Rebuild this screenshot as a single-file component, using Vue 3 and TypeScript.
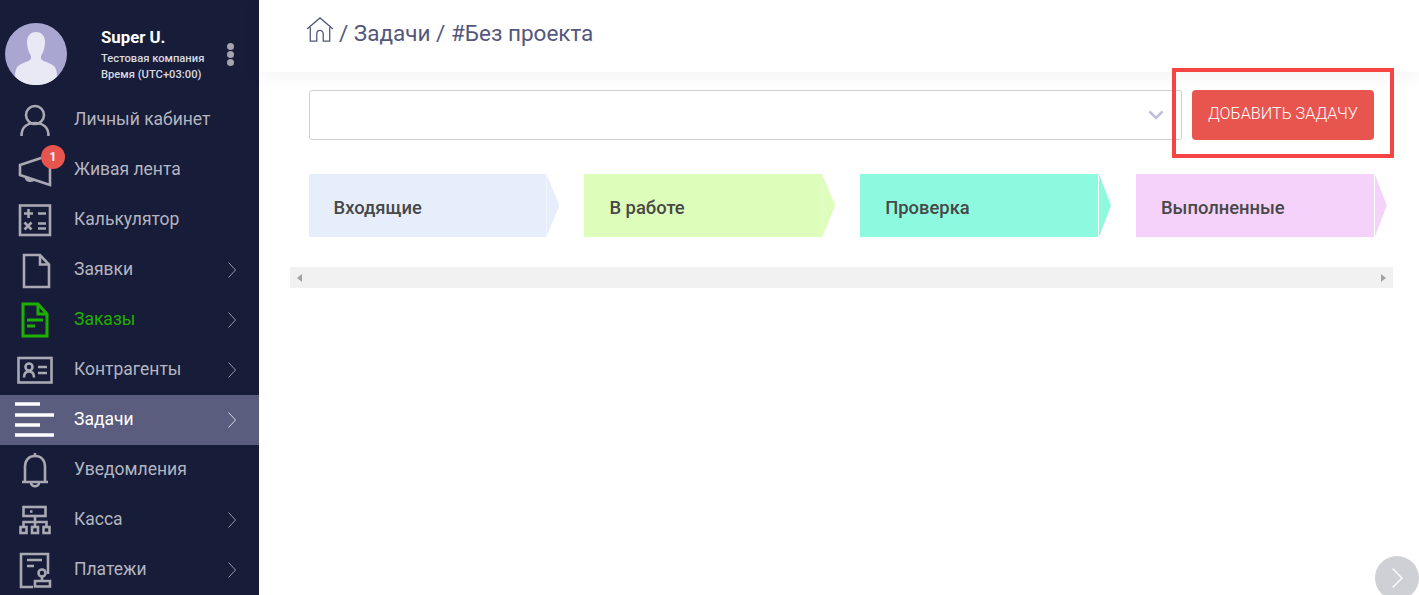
<template>
  <div class="app">
    <aside class="side">
      <div class="user">
        <svg class="user__avatar" viewBox="0 0 62 62">
          <circle cx="31" cy="31" r="31" fill="#a9a6d2" />
          <path d="M31 9c-6 0-9 4.500-9 10 0 5 1.500 10 3.500 13 1 2 .8 4-.5 5-3 2-9 3.500-12 6-2 2-3 6-3 10.500C15 59.500 23 62 31 62s16-2.500 21-8.500c0-4.500-1-8.500-3-10.500-3-2.500-9-4-12-6-1.300-1-1.500-3-.5-5 2-3 3.500-8 3.500-13 0-5.500-3-10-9-10z" fill="#e9e8f5" />
        </svg>
        <div class="user__info">
          <div class="user__name">Super U.</div>
          <div class="user__meta">Тестовая компания</div>
          <div class="user__meta">Время (UTC+03:00)</div>
        </div>
        <div class="user__dots"><i /><i /><i /></div>
      </div>
      <nav class="menu">
        <a
          v-for="item in menu"
          :key="item.label"
          class="menu__item"
          :class="{ 'menu__item--active': item.active, 'menu__item--green': item.green }"
        >
          <span class="menu__icon">
            <svg viewBox="0 0 44 44" fill="none" stroke="currentColor" stroke-width="2.600">
              <template v-if="item.icon === 'user'">
                <circle cx="22" cy="17" r="9" />
                <path d="M8.500 38c0-8 5-13 13.500-13s13.500 5 13.500 13" />
              </template>
              <template v-else-if="item.icon === 'horn'">
                <path d="M7 17 37 7v30L7 27z" />
                <path d="M13 29c0 4 6 5 8 2" />
              </template>
              <template v-else-if="item.icon === 'calc'">
                <rect x="7" y="7.500" width="30" height="29.500" />
                <path d="M11 15.500h9M15.500 11v9M25 15.500h8M11.500 24.500l7 7M18.500 24.500l-7 7M25 25.500h8M25 30.500h8" />
              </template>
              <template v-else-if="item.icon === 'file'">
                <path d="M11 7h16l9 9.500V39H11z" />
                <path d="M27 7v9.500h9" />
              </template>
              <template v-else-if="item.icon === 'order'">
                <path d="M10 6h15l9 10v22H10z" stroke-width="3" />
                <path d="M25 6v10h9M14 22h16M14 28h8" stroke-width="3" />
              </template>
              <template v-else-if="item.icon === 'contact'">
                <rect x="5.500" y="10" width="33" height="24.500" />
                <circle cx="16" cy="19" r="3.500" />
                <path d="M11 29.500c0-4 1.500-6 5-6s5 2 5 6M25 19h9M25 25h9" />
              </template>
              <template v-else-if="item.icon === 'tasks'">
                <path d="M2 6h25M2 17h39M2 27h25M2 37h39" stroke-width="3.500" />
              </template>
              <template v-else-if="item.icon === 'bell'">
                <path d="M12 34V19c0-7 4-11 10-11s10 4 10 11v15M9 34h26M22 5v3" />
                <path d="M18 34.500c0 5 8 5 8 0" />
              </template>
              <template v-else-if="item.icon === 'cash'">
                <rect x="10.500" y="9" width="22" height="9" />
                <path d="M22 18v11M10.500 29v-5h23v5M17 13.500h2.500" />
                <rect x="7.500" y="29" width="6" height="6" />
                <rect x="19" y="29" width="6" height="6" />
                <rect x="30.500" y="29" width="6" height="6" />
              </template>
              <template v-else>
                <path d="M35 26V6H8v33h12" />
                <path d="M14 12h15M14 18h7" />
                <circle cx="29" cy="25" r="3.500" />
                <path d="M29 28.500V33M22 33h15v5.500H22z" />
              </template>
            </svg>
            <span v-if="item.badge" class="menu__badge">{{ item.badge }}</span>
          </span>
          <span class="menu__label">{{ item.label }}</span>
          <svg v-if="item.arrow" class="menu__arrow" viewBox="0 0 8 16" fill="none" stroke="currentColor">
            <path d="M.5.500 7.500 8l-7 7.500" />
          </svg>
        </a>
      </nav>
    </aside>

    <main class="main">
      <header class="top">
        <svg class="top__home" viewBox="0 0 30 27" fill="none" stroke="currentColor" stroke-width="1.400">
          <path d="M1 13 15 1l14 12M4.500 11v15h7v-8a3.500 3.500 0 0 1 7 0v8h7V11" />
        </svg>
        <span>/ Задачи / #Без проекта</span>
      </header>

      <div class="content">
        <div class="filter">
          <div class="select">
            <svg class="select__arrow" viewBox="0 0 16 10" fill="none" stroke="currentColor" stroke-width="2.600">
              <path d="M1.500 1.500 8 8l6.500-6.500" />
            </svg>
          </div>
          <button class="add" type="button">ДОБАВИТЬ ЗАДАЧУ</button>
        </div>

        <div class="board">
          <div
            v-for="col in columns"
            :key="col.title"
            class="stage"
            :class="{ 'stage--split': col.split }"
          >
            <div class="stage__body" :style="{ background: col.color }">{{ col.title }}</div>
            <div class="stage__tip" :style="{ background: col.color }" />
          </div>
        </div>

        <div class="scrollbar">
          <i class="scrollbar__left" />
          <i class="scrollbar__right" />
        </div>
      </div>

      <div class="callout" />
      <div class="next">
        <svg viewBox="0 0 12 22" fill="none" stroke="#fff" stroke-width="1.300">
          <path d="M1.500 1.500 11 11l-9.500 9.500" />
        </svg>
      </div>
    </main>
  </div>
</template>

<script setup lang="ts">
type MenuItem = {
  label: string;
  icon: string;
  arrow?: boolean;
  active?: boolean;
  green?: boolean;
  badge?: number;
};

const menu: MenuItem[] = [
  { label: 'Личный кабинет', icon: 'user' },
  { label: 'Живая лента', icon: 'horn', badge: 1 },
  { label: 'Калькулятор', icon: 'calc' },
  { label: 'Заявки', icon: 'file', arrow: true },
  { label: 'Заказы', icon: 'order', arrow: true, green: true },
  { label: 'Контрагенты', icon: 'contact', arrow: true },
  { label: 'Задачи', icon: 'tasks', arrow: true, active: true },
  { label: 'Уведомления', icon: 'bell' },
  { label: 'Касса', icon: 'cash', arrow: true },
  { label: 'Платежи', icon: 'pay', arrow: true },
];

const columns = [
  { title: 'Входящие', color: '#e6eefc', split: false },
  { title: 'В работе', color: '#ddfdbb', split: false },
  { title: 'Проверка', color: '#8dfae0', split: true },
  { title: 'Выполненные', color: '#f5d2fa', split: true },
];
</script>

<style>
html,
body {
  margin: 0;
  background: #fff;
  overflow: hidden;
}
</style>

<style scoped>
.app {
  display: flex;
  height: 595px;
  overflow: hidden;
  font-family: Roboto, 'Liberation Sans', sans-serif;
}

.side {
  flex: 0 0 259px;
  background: #171c38;
  overflow: hidden;
}

.user {
  display: flex;
  align-items: center;
  height: 95px;
  padding: 13px 0 0 5px;
  box-sizing: border-box;
  color: #fff;
}
.user__avatar {
  flex: 0 0 62px;
  width: 62px;
  height: 62px;
}
.user__info {
  margin-left: 34px;
  width: 126px;
}
.user__name {
  font-size: 16.800px;
  font-weight: 700;
  line-height: 22px;
  margin-bottom: 3px;
}
.user__meta {
  font-size: 11.200px;
  font-weight: 500;
  line-height: 16px;
  color: #d9dae3;
}
.user__dots {
  display: flex;
  flex-direction: column;
  gap: 1px;
}
.user__dots i {
  width: 7px;
  height: 7px;
  border-radius: 50%;
  background: #a4a4ad;
}

.menu__item {
  display: flex;
  align-items: center;
  height: 50px;
  padding-left: 13px;
  color: #b4b5c0;
  font-size: 17.500px;
}
.menu__item--active {
  background: #5a5d7e;
  color: #fff;
}
.menu__item--green {
  color: #1eb000;
}
.menu__icon {
  position: relative;
  flex: 0 0 44px;
  width: 44px;
  height: 44px;
  color: #a9a9b3;
}
.menu__item--active .menu__icon {
  color: #fff;
}
.menu__item--green .menu__icon {
  color: #1eb000;
}
.menu__icon svg {
  display: block;
  width: 44px;
  height: 44px;
}
.menu__badge {
  position: absolute;
  top: -3px;
  left: 28px;
  width: 24px;
  height: 24px;
  border-radius: 50%;
  background: #e8554e;
  color: #fff;
  font-size: 12px;
  font-weight: 700;
  line-height: 24px;
  text-align: center;
}
.menu__label {
  margin: 0 0 2px 17px;
  flex: 1;
}
.menu__arrow {
  width: 8px;
  height: 16px;
  margin-right: 23px;
  color: #9a9bab;
}
.menu__item--active .menu__arrow {
  color: #d8d9e4;
}

.main {
  position: relative;
  flex: 1;
  min-width: 0;
}

.top {
  display: flex;
  align-items: center;
  gap: 5px;
  height: 72px;
  padding: 0 0 7px 47px;
  box-sizing: border-box;
  box-shadow: 0 4px 20px rgba(0, 0, 0, 0.05);
  color: #53587b;
  font-size: 22.500px;
}
.top__home {
  width: 28px;
  height: 25px;
  margin-bottom: 6px;
}

.content {
  padding: 18px 26px 0 31px;
}

.filter {
  display: flex;
  gap: 10px;
  margin-left: 19px;
  margin-right: 19px;
}
.select {
  flex: 1;
  position: relative;
  display: flex;
  align-items: center;
  justify-content: flex-end;
  height: 50px;
  padding-right: 17px;
  box-sizing: border-box;
  border: 1px solid #cfcfd6;
  border-radius: 3px;
  background: #fff;
}
.select__arrow {
  width: 16px;
  height: 10px;
  color: #bec0d6;
}
.add {
  width: 182px;
  height: 50px;
  padding: 0 0 4px;
  border: 0;
  border-radius: 4px;
  background: #e8554e;
  color: #fff;
  font-family: inherit;
  font-size: 16.200px;
  font-weight: 300;
}

.board {
  display: flex;
  gap: 25px;
  margin: 34px 0 0 18.600px;
}
.stage {
  display: flex;
  width: 250.800px;
  height: 63px;
}
.stage__body {
  flex: 1;
  display: flex;
  align-items: center;
  padding: 4px 0 0 25px;
  color: #484848;
  font-size: 18.400px;
  font-weight: 500;
}
.stage__tip {
  flex: 0 0 13px;
  clip-path: polygon(0 0, 100% 50%, 0 100%);
}
.stage--split .stage__tip {
  margin-left: 1px;
  flex-basis: 12px;
}

.scrollbar {
  display: flex;
  align-items: center;
  justify-content: space-between;
  height: 21px;
  margin-top: 30px;
  padding: 0 7px;
  background: #f1f1f1;
}
.scrollbar i {
  width: 0;
  height: 0;
  border-top: 4.500px solid transparent;
  border-bottom: 4.500px solid transparent;
}
.scrollbar__left {
  border-right: 5px solid #a3a3a3;
}
.scrollbar__right {
  border-left: 5px solid #a3a3a3;
}

.callout {
  position: absolute;
  left: 913px;
  top: 68px;
  width: 222px;
  height: 90px;
  box-sizing: border-box;
  border: 4px solid #f44444;
  pointer-events: none;
}

.next {
  position: absolute;
  left: 1116px;
  top: 556px;
  display: flex;
  align-items: center;
  justify-content: center;
  width: 44px;
  height: 44px;
  border-radius: 50%;
  background: #cfcfd6;
}
.next svg {
  width: 12px;
  height: 22px;
}
</style>
